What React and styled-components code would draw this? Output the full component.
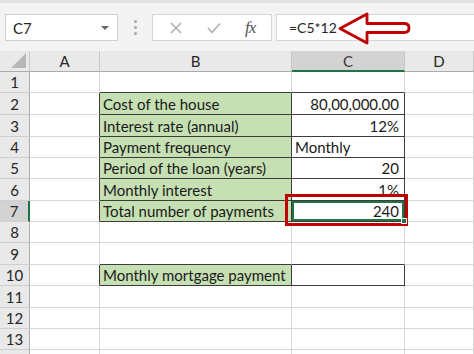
import { Fragment } from "react";
import styled, { createGlobalStyle } from "styled-components";

const GlobalStyle = createGlobalStyle`
    html, body {
        margin: 0;
        padding: 0;
        background: #ffffff;
        overflow: hidden;
    }
    * { box-sizing: border-box; }
`;

const COLS = ["A", "B", "C", "D"];
const COL_WIDTHS = "30px 70px 192px 113px 1fr";
const ROW_HEIGHTS = [21, 21, 22, 22, 21, 21, 22, 21, 21, 22, 21, 22, 21, 21, 21];
const LAST_LABELLED = 13;

const cells = {
    "2B": { text: "Cost of the house", fill: true },
    "2C": { text: "80,00,000.00", align: "right" },
    "3B": { text: "Interest rate (annual)", fill: true },
    "3C": { text: "12%", align: "right" },
    "4B": { text: "Payment frequency", fill: true },
    "4C": { text: "Monthly" },
    "5B": { text: "Period of the loan (years)", fill: true },
    "5C": { text: "20", align: "right" },
    "6B": { text: "Monthly interest", fill: true },
    "6C": { text: "1%", align: "right" },
    "7B": { text: "Total number of payments", fill: true },
    "7C": { text: "240", align: "right", selected: true },
    "10B": { text: "Monthly mortgage payment", fill: true },
    "10C": { text: "" },
};

const isBox = (r, c) => Boolean(cells[`${r}${c}`]);

const Frame = styled.div`
    width: 474px;
    height: 354px;
    display: flex;
    flex-direction: column;
    font-family: Lato, "Open Sans", sans-serif;
    overflow: hidden;
`;

const Toolbar = styled.div`
    height: 51px;
    flex-shrink: 0;
    display: flex;
    align-items: flex-start;
    padding: 14px 0 0 5px;
    background: #f3f3f3;
    border-top: 3px solid #e2e2e2;
`;

const NameBox = styled.div`
    width: 113px;
    height: 27px;
    margin-top: -3px;
    display: flex;
    align-items: center;
    justify-content: space-between;
    padding: 0 8px 0 7px;
    background: #fff;
    border: 1px solid #d0d0d0;
    font-size: 15px;
    color: #262626;
`;

const Caret = styled.span`
    width: 0;
    height: 0;
    border-left: 4px solid transparent;
    border-right: 4px solid transparent;
    border-top: 4px solid #6a6a6a;
`;

const Grip = styled.div`
    width: 34px;
    height: 27px;
    margin-top: -3px;
    display: flex;
    flex-direction: column;
    align-items: center;
    justify-content: center;
    gap: 3px;

    i {
        width: 3px;
        height: 3px;
        border-radius: 50%;
        background: #a8a8a8;
    }
`;

const FxBox = styled.div`
    width: 120px;
    height: 27px;
    margin-top: -3px;
    display: flex;
    align-items: center;
    justify-content: space-around;
    padding: 0 4px;
    background: #fff;
    border: 1px solid #d6d6d6;
`;

const Fx = styled.span`
    font-family: "Liberation Serif", serif;
    font-style: italic;
    font-size: 17px;
    color: #555;
    letter-spacing: -1px;
`;

const FormulaBox = styled.div`
    position: relative;
    flex: 1;
    height: 27px;
    margin: -3px 0 0 4px;
    display: flex;
    align-items: center;
    padding-left: 12px;
    background: #fff;
    border: 1px solid #d6d6d6;
    border-right: none;
    font-size: 14px;
    color: #262626;
`;

const ArrowMark = styled.svg`
    position: absolute;
    left: 61px;
    top: -3px;
`;

const Sheet = styled.div`
    flex: 1;
    display: grid;
    grid-template-columns: ${COL_WIDTHS};
    grid-template-rows: ${ROW_HEIGHTS.map((h) => h + "px").join(" ")};
    font-size: 15px;
    color: #1a1a1a;
`;

const Corner = styled.div`
    position: relative;
    background: #e9e9e9;
    border-right: 1px solid #c8c8c8;
    border-bottom: 1px solid #ababab;

    &::after {
        content: "";
        position: absolute;
        right: 3px;
        bottom: 3px;
        width: 0;
        height: 0;
        border-left: 15px solid transparent;
        border-bottom: 15px solid #b7b7b7;
    }
`;

const ColHead = styled.div`
    display: flex;
    align-items: center;
    justify-content: center;
    font-size: 15px;
    color: ${(p) => (p.$active ? "#3b3b3b" : "#262626")};
    background: ${(p) => (p.$active ? "#d3d3d3" : "#e9e9e9")};
    border-right: 1px solid #c8c8c8;
    border-bottom: ${(p) => (p.$active ? "2px solid #217346" : "1px solid #ababab")};
`;

const RowHead = styled.div`
    display: flex;
    align-items: center;
    justify-content: center;
    font-size: 15px;
    color: #262626;
    background: ${(p) => (p.$active ? "#d3d3d3" : "#e9e9e9")};
    border-right: ${(p) => (p.$active ? "2px solid #217346" : "1px solid #ababab")};
    border-bottom: 1px solid #cfcfcf;
`;

const Cell = styled.div`
    position: relative;
    display: flex;
    align-items: center;
    justify-content: ${(p) => (p.$align === "right" ? "flex-end" : "flex-start")};
    padding: 0 5px 0 3px;
    white-space: nowrap;
    background: ${(p) => (p.$fill ? "#c6e0b4" : "#ffffff")};
    border-right: 1px solid ${(p) => (p.$darkRight ? "#3c3c3c" : "#d6d6d6")};
    border-bottom: 1px solid ${(p) => (p.$darkBottom ? "#3c3c3c" : "#d6d6d6")};
    ${(p) => p.$selected && "box-shadow: inset 0 0 0 2px #217346;"}
`;

const Handle = styled.span`
    position: absolute;
    right: -3px;
    bottom: -3px;
    width: 6px;
    height: 6px;
    background: #217346;
    border: 1px solid #fff;
    z-index: 3;
`;

const Callout = styled.span`
    position: absolute;
    left: -7px;
    right: -4px;
    top: -7px;
    bottom: -5px;
    border: 3px solid #c00000;
    z-index: 2;
    pointer-events: none;
`;

export default function App() {
    const rows = Array.from({ length: ROW_HEIGHTS.length - 1 }, (_, i) => i + 1);

    return (
        <Frame>
            <GlobalStyle />
            <Toolbar>
                <NameBox>
                    <span>C7</span>
                    <Caret />
                </NameBox>
                <Grip><i /><i /><i /></Grip>
                <FxBox>
                    <svg width="14" height="14" viewBox="0 0 14 14">
                        <path d="M2 2 L12 12 M12 2 L2 12" stroke="#b3b3b3" strokeWidth="1.6" fill="none" />
                    </svg>
                    <svg width="16" height="14" viewBox="0 0 16 14">
                        <path d="M2 7 L6 11.5 L14 2.5" stroke="#b3b3b3" strokeWidth="1.8" fill="none" />
                    </svg>
                    <Fx>fx</Fx>
                </FxBox>
                <FormulaBox>
                    =C5*12
                    <ArrowMark width="74" height="33" viewBox="0 0 74 33">
                        <path
                            d="M2 16.5 L29 2 L29 11.5 L66 11.5 Q71 11.5 71 16 Q71 20.5 66 20.5 L29 20.5 L29 31 Z"
                            fill="#fff"
                            stroke="#c00000"
                            strokeWidth="2.8"
                            strokeLinejoin="round"
                        />
                    </ArrowMark>
                </FormulaBox>
            </Toolbar>

            <Sheet>
                <Corner />
                {COLS.map((c) => (
                    <ColHead key={c} $active={c === "C"}>{c}</ColHead>
                ))}

                {rows.map((r) => (
                    <Fragment key={r}>
                        <RowHead $active={r === 7}>
                            {r <= LAST_LABELLED ? r : ""}
                        </RowHead>
                        {COLS.map((c, ci) => {
                            const cell = cells[`${r}${c}`] || {};
                            const next = COLS[ci + 1];
                            return (
                                <Cell
                                    key={c}
                                    $fill={cell.fill}
                                    $align={cell.align}
                                    $selected={cell.selected}
                                    $darkRight={isBox(r, c) || (next && isBox(r, next))}
                                    $darkBottom={isBox(r, c) || isBox(r + 1, c)}
                                >
                                    {cell.text}
                                    {cell.selected && <Handle />}
                                    {cell.selected && <Callout />}
                                </Cell>
                            );
                        })}
                    </Fragment>
                ))}
            </Sheet>
        </Frame>
    );
}
